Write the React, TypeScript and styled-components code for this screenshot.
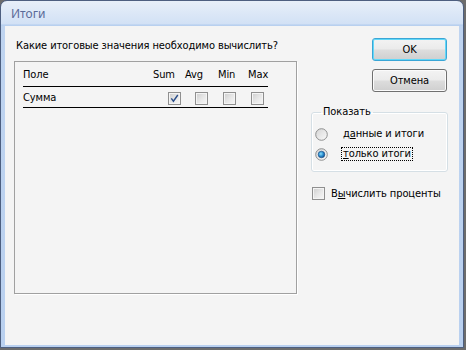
import React from 'react';
import styled, { createGlobalStyle } from 'styled-components';

const Global = createGlobalStyle`
  html, body { margin: 0; padding: 0; }
  body {
    background: #6c6c6c;
    width: 466px;
    height: 350px;
    overflow: hidden;
    font-family: "DejaVu Sans Condensed", "DejaVu Sans", sans-serif;
    font-size: 11px;
    letter-spacing: -0.1px;
    color: #000;
  }
`;

const Window = styled.div`
  box-sizing: border-box;
  width: 464px;
  height: 348px;
  display: flex;
  flex-direction: column;
  border: 1px solid #4d5f80;
  border-radius: 7px 7px 0 0;
  background: linear-gradient(#e7eff9 0px, #d2e1f5 23px, #b2ccee 24px, #bfd4f0 25px, #b9d0ef 100%);
  padding: 0 4px 2px 4px;
  overflow: hidden;
`;

const TitleBar = styled.div`
  height: 25px;
  display: flex;
  align-items: center;
  padding-left: 6px;
  font-family: "Noto Sans", "Liberation Sans", sans-serif;
  font-size: 12px;
  letter-spacing: 0;
  color: #5a6a98;
  flex: none;
`;

const Body = styled.div`
  flex: 1;
  background: #f4f4f4;
  display: flex;
  padding: 12px 11px 0 9px;
  gap: 14px;
`;

const LeftCol = styled.div`
  width: 283px;
  display: flex;
  flex-direction: column;
`;

const Prompt = styled.div`
  line-height: 16px;
  margin-left: 2px;
  white-space: nowrap;
`;

const TableBox = styled.div`
  box-sizing: border-box;
  margin-top: 7px;
  height: 233px;
  border: 1px solid #a0a0a0;
  box-shadow: 1px 1px 0 #fff;
  padding: 0 8px;
`;

const HeaderRow = styled.div`
  display: grid;
  grid-template-columns: 130px 32px 33px 30px auto;
  width: 245px;
  line-height: 14px;
  padding: 6px 0 4px;
  border-bottom: 1px solid #000;
  white-space: nowrap;
`;

const DataRow = styled.div`
  display: grid;
  grid-template-columns: 145px 27px 28px 28px auto;
  width: 245px;
  height: 16px;
  align-items: center;
  line-height: 14px;
  padding: 3px 0 1px;
  border-bottom: 1px solid #000;
`;

const Box = styled.span`
  box-sizing: border-box;
  display: inline-flex;
  align-items: center;
  justify-content: center;
  width: 13px;
  height: 13px;
  border: 1px solid #8f8f8f;
  box-shadow: inset 0 0 0 1px #f4f4f4;
  background: linear-gradient(135deg, #cdcdcd 0%, #e6e6e6 50%, #f8f8f8 100%);
  flex: none;
`;

const CheckMark = () => (
  <svg width="9" height="9" viewBox="0 0 9 9">
    <path d="M1.3 4.4 L3.4 7.2 L7.8 1.0" fill="none" stroke="#2c4f8a" strokeWidth="1.4" />
  </svg>
);

const CheckBox = ({ checked }: { checked?: boolean }) => <Box>{checked && <CheckMark />}</Box>;

const RightCol = styled.div`
  width: 137px;
  display: flex;
  flex-direction: column;
`;

const Button = styled.button<{ $default?: boolean }>`
  align-self: flex-end;
  margin-right: 1px;
  width: 75px;
  height: 23px;
  padding: 0;
  font-family: "DejaVu Sans Condensed", "DejaVu Sans", sans-serif;
  font-size: 11px;
  letter-spacing: -0.1px;
  color: #000;
  border-radius: 3px;
  border: 1px solid ${p => (p.$default ? '#3aa6d6' : '#707070')};
  box-shadow: inset 0 0 0 1px ${p => (p.$default ? '#62d8f8' : '#fbfbfb')};
  background: linear-gradient(#f3f3f3 0%, #ebebeb 48%, #dddddd 52%, #cfcfcf 100%);
  & + & {
    margin-top: 8px;
  }
`;

const Group = styled.fieldset`
  margin: 12px 0 0 0;
  padding: 4px 0 7px 3px;
  border: 1px solid #d5dfe5;
  border-radius: 3px;
  box-shadow: inset 0 0 0 1px #fff;
  min-inline-size: 0;
`;

const Legend = styled.legend`
  margin-left: 6px;
  padding: 0 2px;
  line-height: 16px;
`;

const RadioRow = styled.div`
  display: flex;
  align-items: center;
  height: 20px;
`;

const RadioLabel = styled.span<{ $focused?: boolean }>`
  margin-left: 13px;
  padding: 0 1px;
  line-height: 12px;
  border: 1px dotted ${p => (p.$focused ? '#000' : 'transparent')};
  white-space: nowrap;
`;

const Radio = ({ checked }: { checked?: boolean }) => (
  <svg width="13" height="13" viewBox="0 0 13 13">
    <defs>
      <linearGradient id="rg" x1="0" y1="0" x2="1" y2="1">
        <stop offset="0" stopColor="#d4d4d4" />
        <stop offset="1" stopColor="#fbfbfb" />
      </linearGradient>
      <radialGradient id="rd" cx="0.4" cy="0.4" r="0.7">
        <stop offset="0" stopColor="#8fe0fb" />
        <stop offset="0.5" stopColor="#2a8ed0" />
        <stop offset="1" stopColor="#0d3f7a" />
      </radialGradient>
    </defs>
    <circle cx="6.5" cy="6.5" r="5.8" fill="url(#rg)" stroke="#8e8f8f" strokeWidth="1" />
    {checked && <circle cx="6.5" cy="6.5" r="3.3" fill="url(#rd)" stroke="#1a4c84" strokeWidth="0.6" />}
  </svg>
);

const CheckRow = styled.div`
  display: flex;
  align-items: center;
  height: 16px;
  margin-top: 13px;
  padding-left: 1px;
  gap: 6px;
  white-space: nowrap;
`;

const Mn = styled.u`
  text-decoration: underline;
  text-underline-offset: 1px;
`;

export default function App() {
  return (
    <>
      <Global />
      <Window>
        <TitleBar>Итоги</TitleBar>
        <Body>
          <LeftCol>
            <Prompt>Какие итоговые значения необходимо вычислить?</Prompt>
            <TableBox>
              <HeaderRow>
                <span>Поле</span>
                <span>Sum</span>
                <span>Avg</span>
                <span>Min</span>
                <span>Max</span>
              </HeaderRow>
              <DataRow>
                <span>Сумма</span>
                <CheckBox checked />
                <CheckBox />
                <CheckBox />
                <CheckBox />
              </DataRow>
            </TableBox>
          </LeftCol>
          <RightCol>
            <Button $default>OK</Button>
            <Button>Отмена</Button>
            <Group>
              <Legend>Показать</Legend>
              <RadioRow>
                <Radio />
                <RadioLabel>
                  д<Mn>а</Mn>нные и итоги
                </RadioLabel>
              </RadioRow>
              <RadioRow>
                <Radio checked />
                <RadioLabel $focused>
                  <Mn>т</Mn>олько итоги
                </RadioLabel>
              </RadioRow>
            </Group>
            <CheckRow>
              <CheckBox />
              <span>
                В<Mn>ы</Mn>числить проценты
              </span>
            </CheckRow>
          </RightCol>
        </Body>
      </Window>
    </>
  );
}
